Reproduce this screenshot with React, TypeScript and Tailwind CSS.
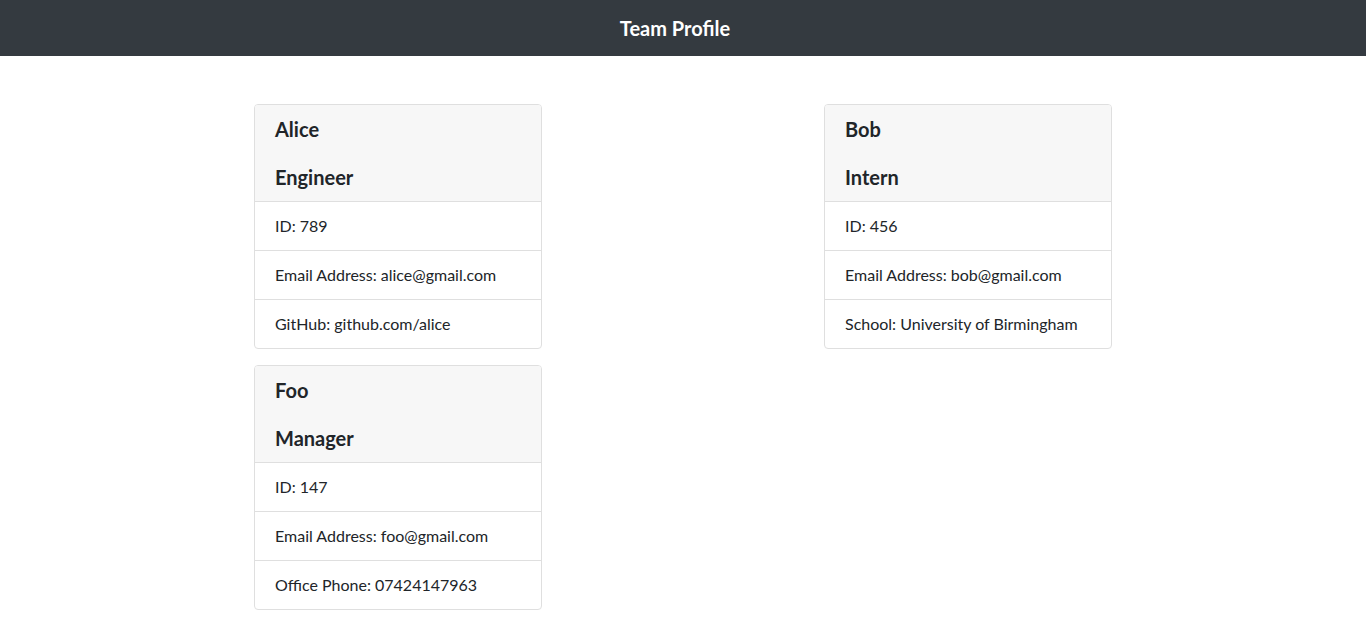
const members = [
  {
    name: "Alice",
    role: "Engineer",
    id: 789,
    email: "alice@gmail.com",
    extra: "GitHub: github.com/alice",
  },
  {
    name: "Bob",
    role: "Intern",
    id: 456,
    email: "bob@gmail.com",
    extra: "School: University of Birmingham",
  },
  {
    name: "Foo",
    role: "Manager",
    id: 147,
    email: "foo@gmail.com",
    extra: "Office Phone: 07424147963",
  },
]

type Member = (typeof members)[number]

function ProfileCard({ member }: { member: Member }) {
  return (
    <div className="w-[288px] mb-4 rounded border border-[#dfdfdf] bg-white overflow-hidden">
      <div className="bg-[#f7f7f7] border-b border-[#dfdfdf] px-5 py-3 flex flex-col gap-6">
        <h5 className="text-xl font-bold leading-6">{member.name}</h5>
        <h5 className="text-xl font-bold leading-6">{member.role}</h5>
      </div>
      <ul>
        <li className="px-5 py-3 leading-6 border-b border-[#dfdfdf]">ID: {member.id}</li>
        <li className="px-5 py-3 leading-6 border-b border-[#dfdfdf]">Email Address: {member.email}</li>
        <li className="px-5 py-3 leading-6">{member.extra}</li>
      </ul>
    </div>
  )
}

export default function App() {
  return (
    <div className="min-h-screen bg-white text-[#212529] font-['Lato',sans-serif]">
      <header className="h-14 bg-[#343a40] flex items-center justify-center pr-4">
        <h1 className="text-white text-xl font-bold">Team Profile</h1>
      </header>
      <main className="w-[1140px] mx-auto mt-12 grid grid-cols-2 items-start">
        <div className="flex flex-col items-center">
          <ProfileCard member={members[0]} />
          <ProfileCard member={members[2]} />
        </div>
        <div className="flex flex-col items-center">
          <ProfileCard member={members[1]} />
        </div>
      </main>
    </div>
  )
}
